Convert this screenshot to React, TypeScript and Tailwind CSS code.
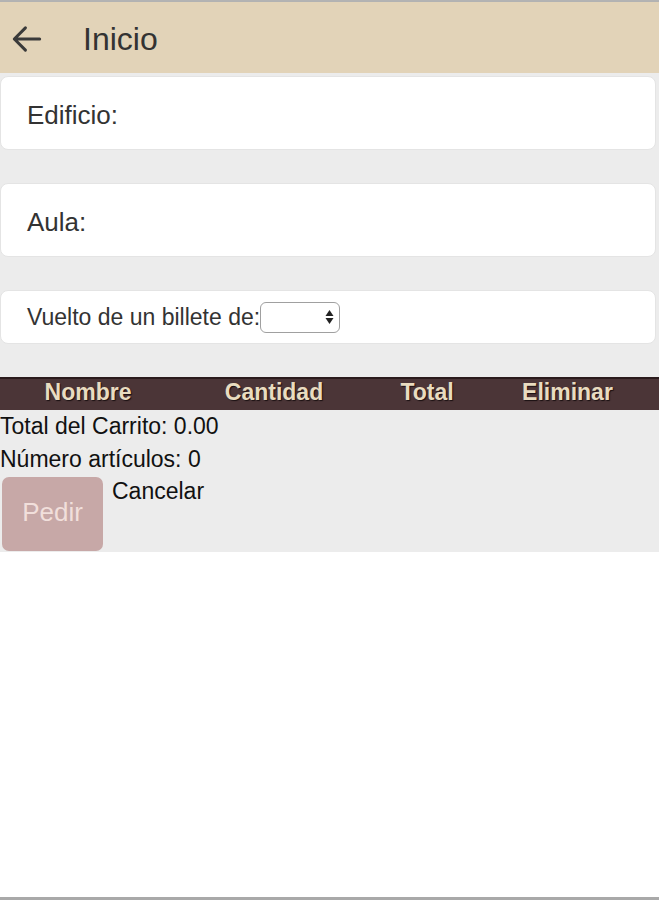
import React from 'react';

export default function App() {
  return (
    <div className="min-h-[900px] w-full bg-white font-['Liberation_Sans',Arial,sans-serif] flex flex-col border-t-2 border-[#b3b3b3]">
      {/* header */}
      <header className="h-[71px] bg-[#e2d3b8] flex items-center shadow-[0_1px_2px_rgba(0,0,0,0.08)]">
        <svg width="38" height="38" viewBox="0 0 24 24" className="ml-[8px] mt-[3px]" fill="none" stroke="#3a3a3a" strokeWidth="1.9" strokeLinecap="round" strokeLinejoin="round">
          <path d="M20 12H4M11 5l-7 7 7 7" />
        </svg>
        <h1 className="ml-[37px] mt-[3px] text-[32px] text-[#333]">Inicio</h1>
      </header>

      <main className="bg-[#ececec] flex flex-col pt-[3px]">
        <div className="mr-[3px] h-[74px] bg-white rounded-[8px] border border-[#e4e4e4] flex items-center px-[26px]">
          <span className="text-[26px] text-[#333] mt-[4px]">Edificio:</span>
        </div>
        <div className="mr-[3px] mt-[33px] h-[74px] bg-white rounded-[8px] border border-[#e4e4e4] flex items-center px-[26px]">
          <span className="text-[26px] text-[#333] mt-[4px]">Aula:</span>
        </div>
        <div className="mr-[3px] mt-[33px] h-[54px] bg-white rounded-[8px] border border-[#e4e4e4] flex items-center px-[26px]">
          <span className="text-[23px] text-[#333]">Vuelto de un billete de:</span>
          <div className="w-[80px] h-[31px] rounded-[6px] border border-[#a0a0a0] bg-white flex items-center justify-end pr-[5px]">
            <svg width="9" height="16" viewBox="0 0 9 16" fill="#222">
              <path d="M4.5 1 L8.5 7 L0.5 7 Z" />
              <path d="M4.5 15 L8.5 9 L0.5 9 Z" />
            </svg>
          </div>
        </div>

        {/* cart table */}
        <div className="mt-[33px] h-[33px] pb-[5px] bg-[#4b3537] border-t-2 border-[#2b1b1d] grid grid-cols-[176px_196px_110px_1fr] items-center text-[23px] leading-[26px] font-bold text-[#e9dcc0] [text-shadow:1px_1px_1px_#1a1012]">
          <span className="text-center">Nombre</span>
          <span className="text-center">Cantidad</span>
          <span className="text-center">Total</span>
          <span className="text-center pr-[6px]">Eliminar</span>
        </div>
        <div className="text-[23px] text-[#111] leading-[33px]">
          <p>Total del Carrito: 0.00</p>
          <p>Número artículos: 0</p>
        </div>
        <div className="flex items-start pl-[2px] pt-[1px] pb-[1px]">
          <button className="w-[101px] h-[74px] rounded-[7px] bg-[#c7a8a7] text-[26px] text-[#f1dfdb] pb-[3px]">
            Pedir
          </button>
          <span className="ml-[9px] -mt-[3px] text-[23px] text-[#111]">Cancelar</span>
        </div>
      </main>

      <div className="flex-1" />
      <div className="h-[3px] bg-[#a9a9a9]" />
    </div>
  );
}
